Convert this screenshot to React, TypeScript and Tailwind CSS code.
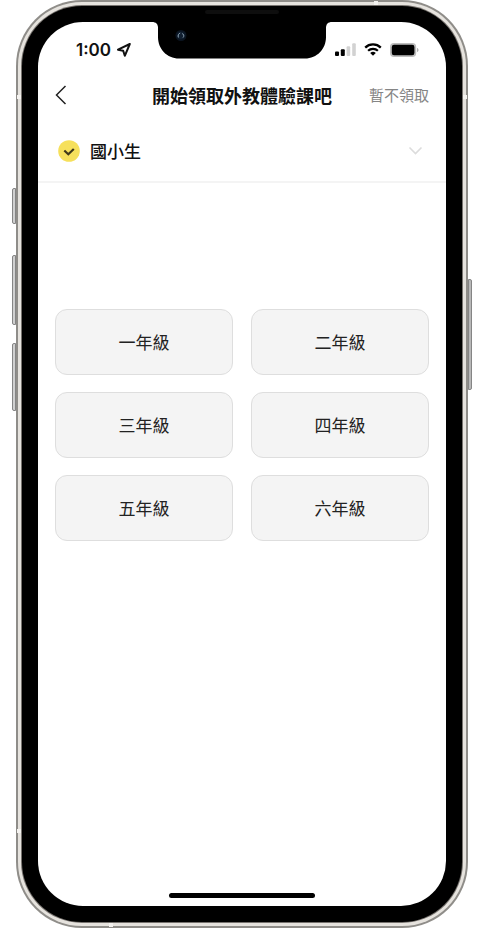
import { useState } from "react";

const grades = ["一年級", "二年級", "三年級", "四年級", "五年級", "六年級"];

function StatusBar() {
  return (
    <div className="flex h-14 items-center justify-between pl-[38px] pr-[27px]">
      <div className="flex items-center gap-1">
        <span className="font-['Inter',sans-serif] text-[17px] leading-5 font-semibold">1:00</span>
        <svg width="18" height="16" viewBox="0 0 18 16" fill="none" aria-hidden="true">
          <path
            d="M14.8 2 3 7.7l5.2 1.1 1.6 5z"
            stroke="#111"
            strokeWidth="2"
            strokeLinejoin="round"
          />
        </svg>
      </div>
      <div className="flex items-center gap-2">
        <svg width="21" height="14" viewBox="0 0 21 14" aria-hidden="true">
          <rect x="0" y="8.5" width="4" height="4.5" rx="1" />
          <rect x="5.8" y="6.3" width="4" height="6.7" rx="1" />
          <rect x="11.6" y="3.3" width="3.6" height="9.7" rx="1" fill="#d2d2d2" />
          <rect x="17.2" y="0.3" width="3.6" height="12.7" rx="1" fill="#d2d2d2" />
        </svg>
        <svg width="18" height="14" viewBox="0 0 18 14" fill="none" aria-hidden="true">
          <path d="M1.2 4.6a11.2 11.2 0 0 1 15.6 0" stroke="#000" strokeWidth="2.3" />
          <path d="M4.1 7.8a7 7 0 0 1 9.8 0" stroke="#000" strokeWidth="2.2" />
          <path d="M6.2 10.1a4 4 0 0 1 5.6 0L9 12.8z" fill="#000" />
        </svg>
        <svg width="29" height="14" viewBox="0 0 29 14" aria-hidden="true">
          <rect x="0" y="0" width="26.2" height="14" rx="4" fill="#bdbdbd" />
          <rect x="1.8" y="1.8" width="22.6" height="10.4" rx="2.2" />
          <path d="M27 5v4c1-.3 1.5-1.1 1.5-2S28 5.300 27 5z" fill="#b0b0b0" />
        </svg>
      </div>
    </div>
  );
}

function Notch() {
  return (
    <div className="absolute inset-x-0 top-0 flex justify-center" aria-hidden="true">
      <svg width="180" height="37" viewBox="0 0 180 37">
        <path d="M0 0h180c-4 0-6 2-6 6v9c0 12-9 21.500-21 21.500H27C15 36.500 6 27 6 15V6c0-4-2-6-6-6z" />
        <circle cx="29" cy="13.5" r="5.5" fill="#0a1420" />
        <circle cx="29" cy="13.5" r="3.8" fill="#111f30" />
        <path d="M26.4 15.500c-.8-2 .2-4 1.800-4.400M30.200 11.600c1.600.4 2.200 2.600.8 4" stroke="#8fa5b5" fill="none" />
      </svg>
    </div>
  );
}

export default function App() {
  const [grade, setGrade] = useState("");
  const [open, setOpen] = useState(true);

  return (
    <main className="flex min-h-screen bg-white pr-[11px] pb-[10px] pl-4 font-['Noto_Sans_CJK_TC',sans-serif] text-[#111]">
      <div className="relative flex flex-1 rounded-[66px] bg-[#8f8d89] p-0.5">
        {/* side keys */}
        <div className="absolute top-[188px] -left-1 h-9 w-1 rounded-l-xs border border-[#858585] bg-[#d0d0d0]" />
        <div className="absolute top-[255px] -left-1 h-[70px] w-1 rounded-l-xs border border-[#858585] bg-[#d0d0d0]" />
        <div className="absolute top-[343px] -left-1 h-[68px] w-1 rounded-l-xs border border-[#858585] bg-[#d0d0d0]" />
        <div className="absolute top-[279px] -right-1 h-[111px] w-1 rounded-r-xs border border-[#858585] bg-[#b8b8b8]" />

        <div className="flex flex-1 rounded-[64px] bg-[#e6e3de] p-[3px]">
          <div className="flex flex-1 rounded-[61px] bg-[#77736f] p-px">
            <div className="flex flex-1 rounded-[60px] bg-black p-4">
              <div className="relative flex flex-1 flex-col overflow-hidden rounded-[45px] bg-white">
                <StatusBar />
                <Notch />

                <header className="grid h-[34px] grid-cols-[1fr_auto_1fr] items-center px-[17px]">
                  <button type="button" aria-label="返回" className="justify-self-start">
                    <svg width="12" height="20" viewBox="0 0 12 20" fill="none">
                      <path d="M10.5 1 1.5 10l9 9" stroke="#222" strokeWidth="1.5" />
                    </svg>
                  </button>
                  <h1 className="text-[18px] leading-6 font-bold">開始領取外教體驗課吧</h1>
                  <button type="button" className="justify-self-end text-[15px] leading-6 text-[#858585]">
                    暫不領取
                  </button>
                </header>

                <button
                  type="button"
                  aria-expanded={open}
                  onClick={() => setOpen(!open)}
                  className="mt-2 flex h-[63px] items-center border-b-2 border-[#f4f4f4] pr-[23px] pl-5"
                >
                  <svg width="22" height="22" viewBox="0 0 22 22" fill="none" aria-hidden="true">
                    <circle cx="11" cy="11" r="10.8" fill="#f6e05b" />
                    <path d="m6.3 10.500 4 3.700 5.500-5.200" stroke="#40391a" strokeWidth="2.2" />
                  </svg>
                  <span className="ml-2.5 text-[17px] leading-6 font-medium">國小生</span>
                  <svg className="ml-auto" width="15" height="10" viewBox="0 0 15 10" fill="none" aria-hidden="true">
                    <path d="m1.5 1.5 6 6 6-6" stroke="#dcdcdc" strokeWidth="1.6" />
                  </svg>
                </button>

                {open && (
                  <div className="mt-[126px] grid grid-cols-2 gap-x-[18px] gap-y-[17px] px-[17px]">
                    {grades.map((name) => (
                      <button
                        key={name}
                        type="button"
                        aria-pressed={grade === name}
                        onClick={() => setGrade(name)}
                        className="h-[66px] rounded-xl border border-[#dedede] bg-[#f4f4f4] text-[17px] leading-6 text-[#222] aria-pressed:border-[#f6e05b]"
                      >
                        {name}
                      </button>
                    ))}
                  </div>
                )}

                <div className="mx-auto mt-auto mb-2 h-[5px] w-[146px] rounded-full bg-black" />
              </div>
            </div>
          </div>
        </div>

        {/* antenna bands and earpiece */}
        <div className="absolute top-[95px] left-px h-1 w-1 bg-[#f4f2ef]" />
        <div className="absolute bottom-[95px] left-px h-1 w-1 bg-[#f4f2ef]" />
        <div className="absolute top-[95px] right-px h-1 w-1 bg-[#f4f2ef]" />
        <div className="absolute top-px right-[90px] h-1 w-1 bg-[#f4f2ef]" />
        <div className="absolute bottom-px left-[93px] h-1 w-1 bg-[#f4f2ef]" />
        <div className="absolute inset-x-0 top-[10px] mx-auto h-1 w-[74px] rounded-full bg-[#0e0e0e]" />
      </div>
    </main>
  );
}
